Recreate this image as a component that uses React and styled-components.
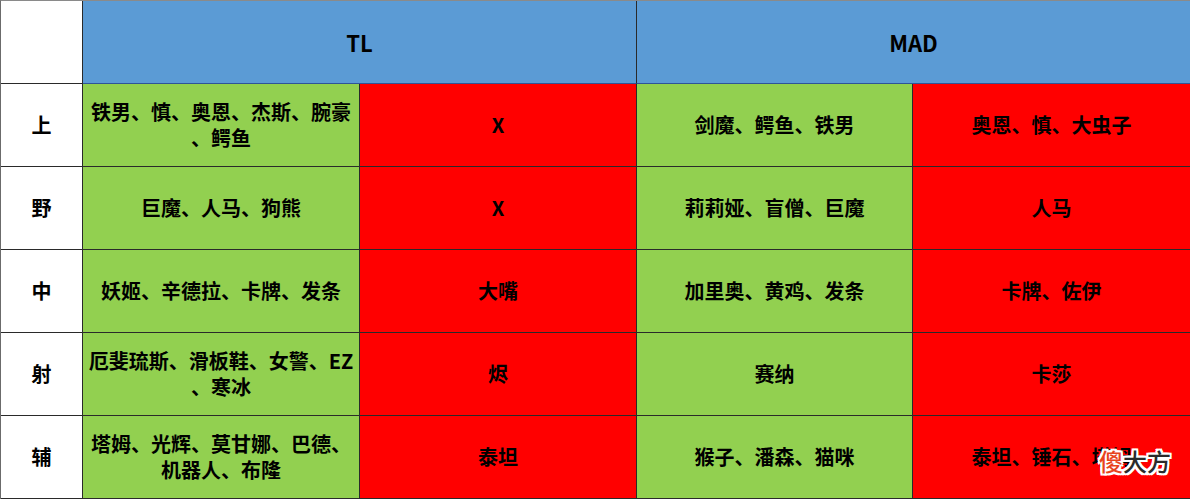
import React from 'react'
import styled, { createGlobalStyle } from 'styled-components'

const GlobalStyle = createGlobalStyle`
    html, body {
        margin:0;
        padding:0;
        background:white;
    }
    body {
        font-family:"Noto Sans CJK SC", "Noto Sans", sans-serif;
    }
`

const Wrap = styled.div`
    position:relative;
    width:1190px;
    height:499px;
    overflow:hidden;
`

const Grid = styled.div`
    display:grid;
    grid-template-columns:82px 277px 277px 276px 278px;
    grid-template-rows:repeat(6, 83px);
    border-left:1px solid #6b6b6b;
    border-top:1px solid #8a8a8a;
    box-sizing:border-box;
`

const palette = {
    blank: '#ffffff',
    head: '#5b9bd5',
    good: '#92d050',
    bad: '#ff0000',
}

const Cell = styled.div`
    grid-column:span ${p => p.span || 1};
    background:${p => palette[p.kind || 'blank']};
    border-right:1px solid #2a2a2a;
    border-bottom:1px solid ${p => p.kind === 'head' ? '#2f5597' : '#2a2a2a'};
    display:flex;
    align-items:center;
    justify-content:center;
    text-align:center;
    padding:0 2px;
    box-sizing:border-box;
    font-weight:700;
    font-size:${p => p.kind === 'head' ? '22px' : '20px'};
    line-height:26px;
    color:#000;
`

const Text = styled.p`
    margin:0;
    line-break:anywhere;
`

const Mark = styled.div`
    position:absolute;
    left:1099px;
    top:443px;
    font-size:24px;
    font-weight:500;
    color:#2b2b2b;
    text-shadow:
        2px 0 0 #fff, -2px 0 0 #fff, 0 2px 0 #fff, 0 -2px 0 #fff,
        2px 2px 0 #fff, -2px -2px 0 #fff, 2px -2px 0 #fff, -2px 2px 0 #fff;
    span {
        color:#e8431c;
    }
`

const rows = [
    ['上', '铁男、慎、奥恩、杰斯、腕豪、鳄鱼', 'X', '剑魔、鳄鱼、铁男', '奥恩、慎、大虫子'],
    ['野', '巨魔、人马、狗熊', 'X', '莉莉娅、盲僧、巨魔', '人马'],
    ['中', '妖姬、辛德拉、卡牌、发条', '大嘴', '加里奥、黄鸡、发条', '卡牌、佐伊'],
    ['射', '厄斐琉斯、滑板鞋、女警、EZ、寒冰', '烬', '赛纳', '卡莎'],
    ['辅', '塔姆、光辉、莫甘娜、巴德、机器人、布隆', '泰坦', '猴子、潘森、猫咪', '泰坦、锤石、塔姆'],
]

export default function App() {
    return (
        <Wrap>
            <GlobalStyle />
            <Grid>
                <Cell />
                <Cell kind="head" span={2}>TL</Cell>
                <Cell kind="head" span={2}>MAD</Cell>
                {rows.map(([lane, a, b, c, d]) => (
                    <React.Fragment key={lane}>
                        <Cell><Text>{lane}</Text></Cell>
                        <Cell kind="good"><Text>{a}</Text></Cell>
                        <Cell kind="bad"><Text>{b}</Text></Cell>
                        <Cell kind="good"><Text>{c}</Text></Cell>
                        <Cell kind="bad"><Text>{d}</Text></Cell>
                    </React.Fragment>
                ))}
            </Grid>
            <Mark><span>傻</span>大方</Mark>
        </Wrap>
    )
}
